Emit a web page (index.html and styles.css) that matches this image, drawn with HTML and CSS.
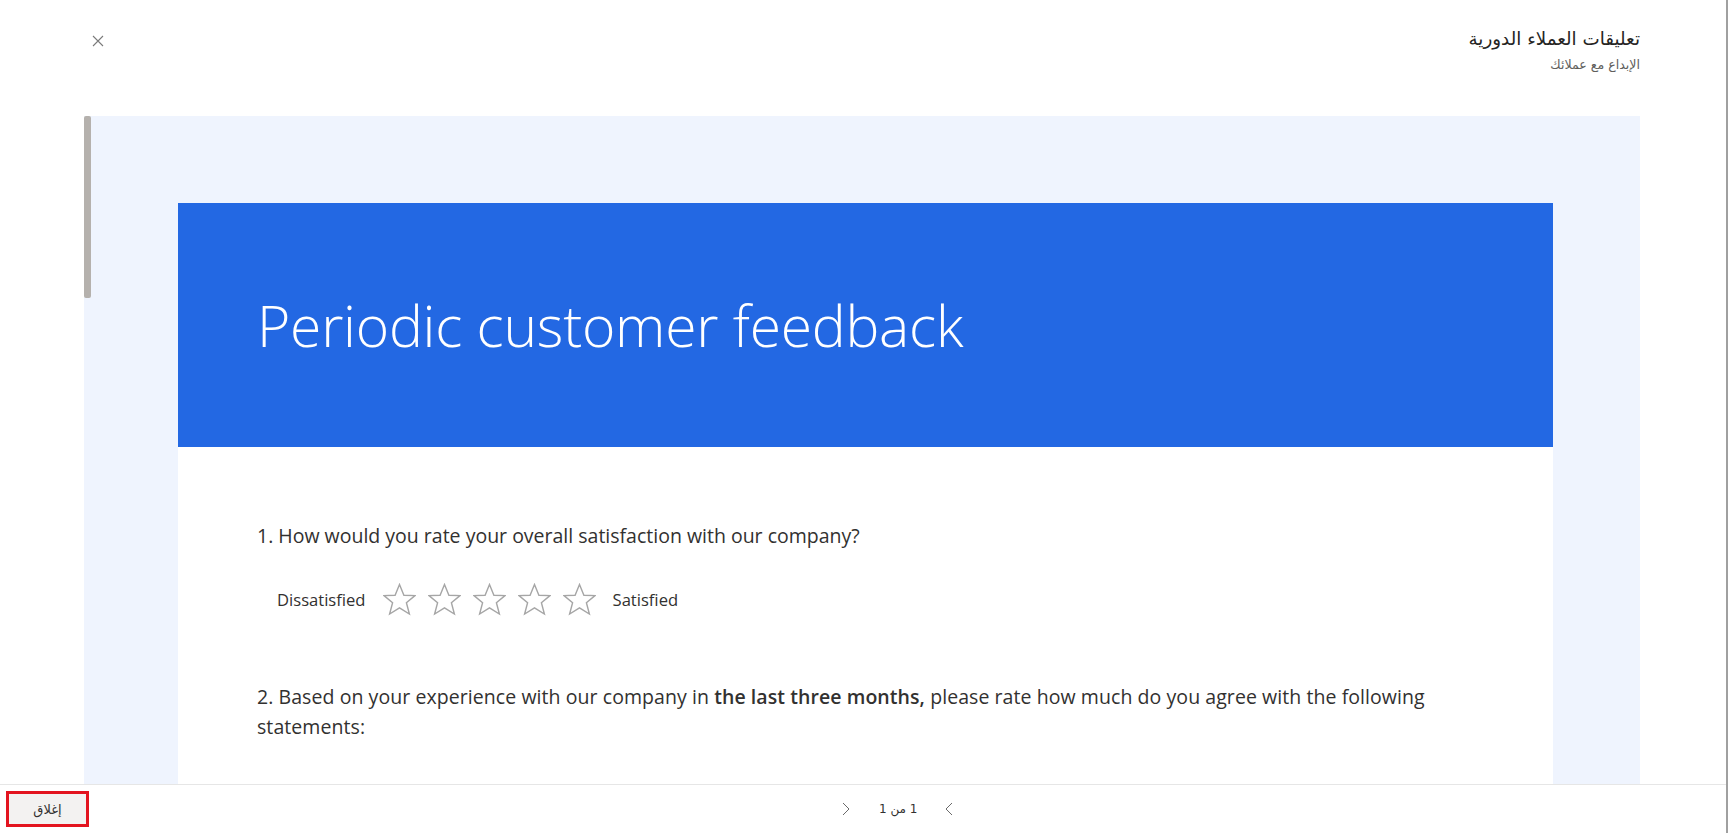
FILE: index.html
```html
<!DOCTYPE html>
<html lang="ar">
<head>
<meta charset="utf-8">
<title>تعليقات العملاء الدورية</title>
<link rel="stylesheet" href="styles.css">
</head>
<body>
<div class="dialog">
  <header class="dlg-header">
    <button class="close-btn" aria-label="Close">
      <svg width="12" height="12" viewBox="0 0 12 12"><path d="M1 1 L11 11 M11 1 L1 11" stroke="#7a7a7a" stroke-width="1.1" fill="none"/></svg>
    </button>
    <div class="titles" dir="rtl">
      <div class="title">تعليقات العملاء الدورية</div>
      <div class="subtitle">الإبداع مع عملائك</div>
    </div>
  </header>
  <main class="dlg-body">
    <div class="preview">
      <div class="scroll-thumb"></div>
      <div class="card">
        <div class="banner">
          <h1 class="banner-title">Periodic customer feedback</h1>
        </div>
        <div class="questions">
          <p class="question">1. How would you rate your overall satisfaction with our company?</p>
          <div class="rating">
            <span class="rating-label">Dissatisfied</span>
            <div class="stars">
              <svg class="star" viewBox="0 0 33 33"><polygon points="16.5,1.5 20.9,12.2 32,12.6 23.4,19.8 26.4,31 16.5,24.8 6.6,31 9.6,19.8 1,12.6 12.1,12.2"/></svg>
              <svg class="star" viewBox="0 0 33 33"><polygon points="16.5,1.5 20.9,12.2 32,12.6 23.4,19.8 26.4,31 16.5,24.8 6.6,31 9.6,19.8 1,12.6 12.1,12.2"/></svg>
              <svg class="star" viewBox="0 0 33 33"><polygon points="16.5,1.5 20.9,12.2 32,12.6 23.4,19.8 26.4,31 16.5,24.8 6.6,31 9.6,19.8 1,12.6 12.1,12.2"/></svg>
              <svg class="star" viewBox="0 0 33 33"><polygon points="16.5,1.5 20.9,12.2 32,12.6 23.4,19.8 26.4,31 16.5,24.8 6.6,31 9.6,19.8 1,12.6 12.1,12.2"/></svg>
              <svg class="star" viewBox="0 0 33 33"><polygon points="16.5,1.5 20.9,12.2 32,12.6 23.4,19.8 26.4,31 16.5,24.8 6.6,31 9.6,19.8 1,12.6 12.1,12.2"/></svg>
            </div>
            <span class="rating-label">Satisfied</span>
          </div>
          <p class="question q2">2. Based on your experience with our company in <b>the last three months,</b> please rate how much do you agree with the following statements:</p>
        </div>
      </div>
    </div>
  </main>
  <footer class="dlg-footer">
    <button class="btn-close" dir="rtl">إغلاق</button>
    <div class="pager">
      <svg class="chev" width="8" height="14" viewBox="0 0 8 14"><path d="M1 1 L7 7 L1 13" stroke="#6a6a6a" stroke-width="1" fill="none"/></svg>
      <span class="pager-text" dir="rtl">1 من 1</span>
      <svg class="chev" width="8" height="14" viewBox="0 0 8 14"><path d="M7 1 L1 7 L7 13" stroke="#6a6a6a" stroke-width="1" fill="none"/></svg>
    </div>
  </footer>
  <div class="edge"></div>
</div>
</body>
</html>
```

FILE: styles.css
```css
* { box-sizing: border-box; }
html, body { margin: 0; padding: 0; }
body {
  width: 1728px;
  height: 833px;
  overflow: hidden;
  background: #ffffff;
  font-family: "Open Sans", "DejaVu Sans", sans-serif;
  color: #323130;
}
.dialog {
  position: relative;
  height: 833px;
  display: flex;
  flex-direction: column;
}
.dlg-header {
  height: 116px;
  display: flex;
  align-items: flex-start;
  justify-content: space-between;
  padding: 0 88px 0 92px;
}
.close-btn {
  margin-top: 35px;
  width: 12px;
  height: 12px;
  padding: 0;
  border: 0;
  background: transparent;
  display: flex;
}
.titles {
  padding-top: 26px;
  text-align: right;
}
.title {
  font-family: "DejaVu Sans", sans-serif;
  font-size: 18.3px;
  line-height: 25px;
  color: #252423;
}
.subtitle {
  font-family: "DejaVu Sans", sans-serif;
  font-size: 12.6px;
  line-height: 18px;
  margin-top: 5px;
  color: #605e5c;
}
.dlg-body {
  flex: 1;
  min-height: 0;
  padding: 0 88px 0 84px;
}
.preview {
  position: relative;
  height: 100%;
  background: #eff4fe;
  padding: 87px 87px 0 94px;
  overflow: hidden;
}
.scroll-thumb {
  position: absolute;
  left: 0;
  top: 0;
  width: 7px;
  height: 182px;
  background: #b5b1ad;
  border-radius: 2px;
}
.card {
  background: #ffffff;
  height: 100%;
}
.banner {
  height: 244px;
  background: #2368e3;
  display: flex;
  align-items: center;
  padding-left: 79px;
}
.banner-title {
  margin: 0;
  font-weight: 300;
  font-size: 57px;
  line-height: 70px;
  color: #ffffff;
  letter-spacing: -0.25px;
}
.questions {
  padding: 74px 79px 0 79px;
}
.question {
  margin: 0;
  font-size: 19.5px;
  line-height: 30px;
  color: #323130;
}
.question b { font-weight: 600; }
.q2 {
  margin-top: 66px;
  letter-spacing: 0.07px;
}
.rating {
  display: flex;
  align-items: center;
  margin-top: 31px;
  padding-left: 20px;
  height: 34px;
}
.rating-label {
  font-size: 16.6px;
  color: #323130;
}
.stars {
  display: flex;
  gap: 12px;
  margin: 0 17px 0 17px;
}
.star {
  width: 33px;
  height: 33px;
}
.star polygon {
  fill: none;
  stroke: #a6a6a6;
  stroke-width: 1.4;
  stroke-linejoin: miter;
}
.dlg-footer {
  height: 49px;
  border-top: 1px solid #e6e6e6;
  display: flex;
  align-items: center;
  padding-left: 6px;
}
.btn-close {
  width: 83px;
  height: 36px;
  border: 3px solid #e3141f;
  background: #f3f2f1;
  font-family: "DejaVu Sans", sans-serif;
  font-size: 13px;
  color: #323130;
  padding: 0;
}
.pager {
  display: flex;
  align-items: center;
  margin-left: 753px;
  gap: 0;
}
.chev { display: block; }
.pager-text {
  font-family: "DejaVu Sans", sans-serif;
  font-size: 12px;
  color: #323130;
  margin: 0 28px 0 29px;
}
.edge {
  position: absolute;
  right: 0;
  top: 0;
  width: 2px;
  height: 100%;
  background: #a0a0a0;
}
```
